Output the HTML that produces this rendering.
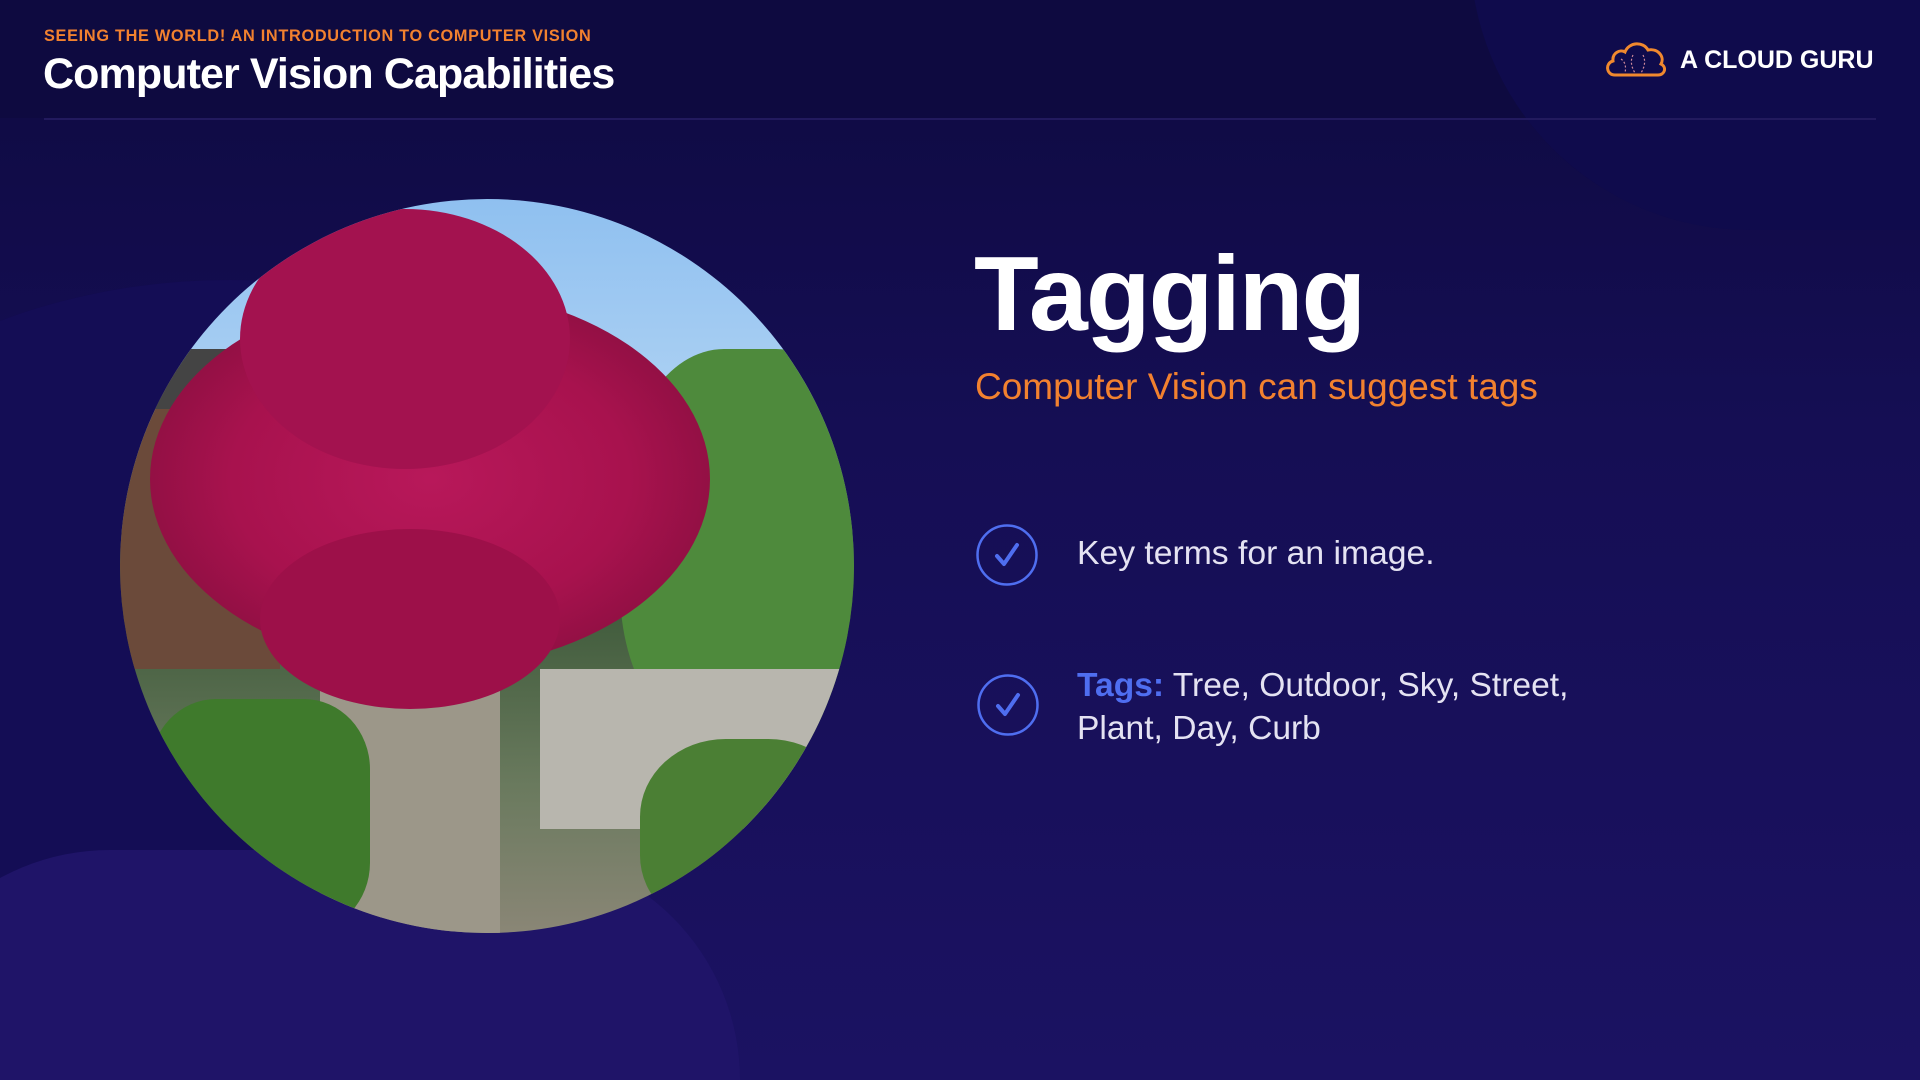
<!DOCTYPE html>
<html style="width:1920px;height:1080px;overflow:hidden"><head><meta charset="utf-8"><style>
*{margin:0;padding:0;box-sizing:border-box}
body{width:1920px;height:1080px;overflow:hidden;font-family:"Liberation Sans",sans-serif}
#w{position:relative;width:1920px;height:1080px;overflow:hidden;background:linear-gradient(180deg,#0e0a40 0%,#150e54 40%,#1b1262 100%)}
.abs{position:absolute}
</style></head><body><div id="w">
<div class="abs" style="left:-260px;top:280px;width:980px;height:700px;border-radius:50%;background:#140d55"></div>
<div class="abs" style="left:-120px;top:850px;width:860px;height:230px;border-radius:430px 430px 0 0;background:#1f1468"></div>
<div class="abs" style="left:0;top:0;width:1920px;height:118px;background:#0e0a40"></div>
<div class="abs" style="left:1470px;top:-330px;width:450px;height:560px;border-radius:280px 0 0 280px;background:#0f0b4c"></div>
<div class="abs" style="left:44px;top:27px;color:#f2812f;font-weight:bold;font-size:16.3px;letter-spacing:0.7px">SEEING THE WORLD! AN INTRODUCTION TO COMPUTER VISION</div>
<div class="abs" style="left:43px;top:50px;color:#fff;font-weight:bold;font-size:43px;letter-spacing:-0.9px">Computer Vision Capabilities</div>
<div class="abs" style="left:44px;top:118px;width:1832px;height:2px;background:#221a5e"></div>
<svg class="abs" style="left:1603px;top:37px" width="66" height="42" viewBox="0 0 66 42"><path d="M12 38 C3 38 2 26 10 24 C9 16 17 12 22 15 C26 5 40 4 45 13 C55 11 62 20 58 27 C64 30 62 38 55 38 Z" fill="none" stroke="#f0892e" stroke-width="3"/><path d="M18 22 q6 4 4 14 M30 18 q-4 8 2 18 M40 18 q4 8 -2 18" stroke="#c89" stroke-width="1.2" stroke-dasharray="2 2" fill="none"/></svg>
<div class="abs" style="left:1680px;top:46px;color:#fff;font-weight:bold;font-size:25px">A CLOUD GURU</div>
<div class="abs" style="left:120px;top:199px;width:734px;height:734px;border-radius:50%;overflow:hidden;background:linear-gradient(180deg,#8fc0f0 0%,#a9cff3 25%,#3e5a3a 55%,#6a7a5e 80%,#8a8676 100%)">
<div class="abs" style="left:0;top:170px;width:160px;height:300px;background:#6b4a3a"></div>
<div class="abs" style="left:0;top:150px;width:170px;height:60px;background:#444"></div>
<div class="abs" style="left:500px;top:150px;width:260px;height:400px;border-radius:40%;background:#4e8a3c"></div>
<div class="abs" style="left:420px;top:470px;width:314px;height:160px;background:#b8b6ae"></div>
<div class="abs" style="left:200px;top:480px;width:180px;height:254px;background:#9c9789"></div>
<div class="abs" style="left:30px;top:500px;width:220px;height:234px;border-radius:30%;background:#3f7a2c"></div>
<div class="abs" style="left:520px;top:540px;width:214px;height:194px;border-radius:40%;background:#4b7f34"></div>
<div class="abs" style="left:30px;top:90px;width:560px;height:380px;border-radius:50%;background:radial-gradient(ellipse,#b8185a 0%,#a8124e 50%,#8a0f40 80%)"></div>
<div class="abs" style="left:120px;top:10px;width:330px;height:260px;border-radius:50%;background:#a3124f"></div>
<div class="abs" style="left:140px;top:330px;width:300px;height:180px;border-radius:50%;background:#9d1049"></div>
</div>
<div class="abs" style="left:974px;top:234px;color:#fff;font-weight:bold;font-size:106px;letter-spacing:-2px">Tagging</div>
<div class="abs" style="left:975px;top:366px;color:#f2812f;font-size:37px">Computer Vision can suggest tags</div>
<svg class="abs" style="left:975px;top:523px" width="66" height="66"><circle cx="32" cy="32" r="29.5" fill="none" stroke="#4f6ef0" stroke-width="2.5"/><path d="M22 33 L29 41 L42 22" fill="none" stroke="#4f6ef0" stroke-width="4" stroke-linecap="round" stroke-linejoin="round"/></svg>
<svg class="abs" style="left:976px;top:673px" width="66" height="66"><circle cx="32" cy="32" r="29.5" fill="none" stroke="#4f6ef0" stroke-width="2.5"/><path d="M22 33 L29 41 L42 22" fill="none" stroke="#4f6ef0" stroke-width="4" stroke-linecap="round" stroke-linejoin="round"/></svg>
<div class="abs" style="left:1077px;top:534px;color:#e4e2f2;font-size:33.7px">Key terms for an image.</div>
<div class="abs" style="left:1077px;top:664px;color:#e4e2f2;font-size:33.6px;line-height:43px"><b style="color:#4f6ef0">Tags:</b> Tree, Outdoor, Sky, Street,<br>Plant, Day, Curb</div>
</div></body></html>
